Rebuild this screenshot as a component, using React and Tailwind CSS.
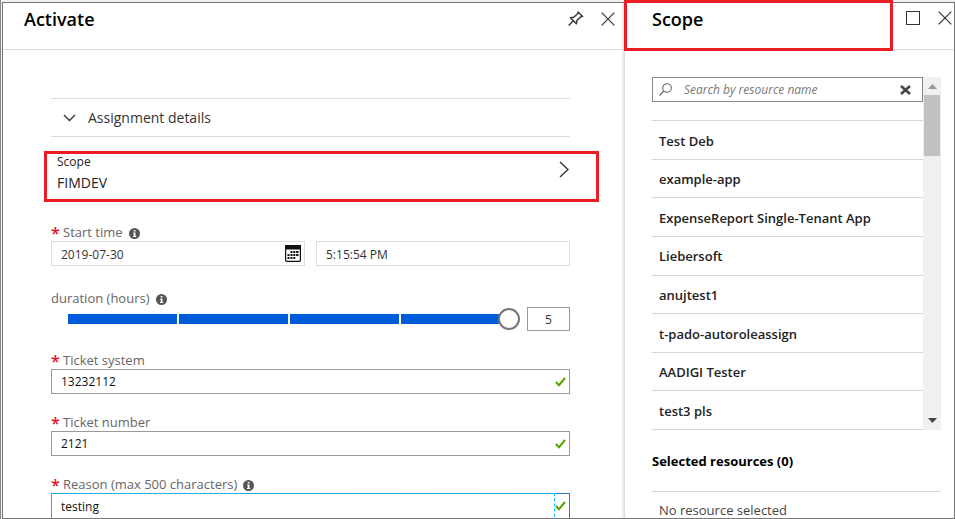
import React from "react";

const resources = [
  "Test Deb",
  "example-app",
  "ExpenseReport Single-Tenant App",
  "Liebersoft",
  "anujtest1",
  "t-pado-autoroleassign",
  "AADIGI Tester",
  "test3 pls",
];

function CloseIcon() {
  return (
    <svg width="14" height="14" viewBox="0 0 14 14" fill="none" stroke="#333" strokeWidth="1.2">
      <path d="M.7.7l12.6 12.6M13.3.7L.7 13.3" />
    </svg>
  );
}

function PinIcon() {
  return (
    <svg width="16" height="16" viewBox="0 0 16 16" fill="none" stroke="#333" strokeWidth="1.4" strokeLinejoin="round">
      <path d="M.6 14.600L5.400 9.800M2.400 6.800l6 6 .500-3.300L12.900 5.700l1.800-.3L10.100.900l-.5 1.900L5.800 6.300z" />
    </svg>
  );
}

function InfoIcon() {
  return (
    <svg width="11" height="11" viewBox="0 0 11 11" aria-label="Info">
      <circle cx="5.500" cy="5.500" r="5.500" fill="#555" />
      <path d="M4.700 1.900h1.800v1.500H4.700zM4.100 4.400h2.400v3.500h.7v1H4v-1h.7V5.400h-.6z" fill="#fff" />
    </svg>
  );
}

function CheckIcon() {
  return (
    <svg className="mr-[3px] shrink-0" width="11" height="10" viewBox="0 0 11 10" fill="none" stroke="#57a300" strokeWidth="2">
      <path d="M.8 5l3.200 3.200L10 1" />
    </svg>
  );
}

function CalendarIcon() {
  return (
    <svg width="16" height="17" viewBox="0 0 16 17">
      <rect x=".6" y=".6" width="14.800" height="15.800" rx=".8" fill="#fff" stroke="#111" strokeWidth="1.200" />
      <path d="M0 0h16v4.500H0z" fill="#111" />
      <path
        d="M5.500 6h2v2h-2zM8.300 6h2v2h-2zM11.100 6h2.400v2h-2.400zM2.500 9h2v2h-2zM5.500 9h2v2h-2zM8.300 9h2v2h-2zM11.100 9h2.400v2h-2.400zM2.500 12h2v2h-2zM5.500 12h2v2h-2zM8.300 12h2v2h-2z"
        fill="#111"
      />
    </svg>
  );
}

function FieldLabel({ htmlFor, required, info, children }) {
  return (
    <div className="flex h-4 items-center text-[13px] text-[#666]">
      {required && <span className="w-3 text-base leading-4 font-semibold text-[#e81123]">*</span>}
      <label htmlFor={htmlFor} className="mr-1.5">
        {children}
      </label>
      {info && (
        <span className="pt-px">
          <InfoIcon />
        </span>
      )}
    </div>
  );
}

function CheckedField({ id, label, value }) {
  return (
    <div>
      <FieldLabel htmlFor={id} required>
        {label}
      </FieldLabel>
      <div className="flex h-[25px] items-center border border-[#999]">
        <input id={id} defaultValue={value} className="min-w-0 flex-1 px-[9px] text-xs text-[#111] outline-none" />
        <CheckIcon />
      </div>
    </div>
  );
}

function ActivatePanel() {
  return (
    <section className="flex min-w-0 flex-1 flex-col border-r border-[#ddd] shadow-[inset_-4px_0_3px_-3px_#ddd]">
      <header className="flex h-[47px] shrink-0 items-start border-b border-[#d9d9d9] pr-[9px] pl-[21px]">
        <h1 className="flex-1 pt-1 text-lg leading-6 font-semibold text-black">Activate</h1>
        <div className="flex gap-[17px] pt-2">
          <button aria-label="Pin">
            <PinIcon />
          </button>
          <button aria-label="Close">
            <CloseIcon />
          </button>
        </div>
      </header>
      <div className="pt-12 pr-[54px] pl-12">
        <button className="flex h-[39px] w-full items-center border-y border-[#ddd] pl-3 text-sm text-[#333]">
          <svg width="13" height="8" viewBox="0 0 13 8" fill="none" stroke="#333" strokeWidth="1.4">
            <path d="M1 1l5.500 5.500L12 1" />
          </svg>
          <span className="pl-3">Assignment details</span>
        </button>
        <button className="-mr-7 -ml-[7px] mt-3.5 flex h-[51px] w-[calc(100%+36px)] items-start justify-between border-3 border-[#ed1c24] pr-[27px] pl-2.5 text-left text-[#222]">
          <span className="flex flex-col">
            <span className="text-xs leading-4">Scope</span>
            <span className="pt-[3px] text-sm leading-5">FIMDEV</span>
          </span>
          <svg className="mt-[7px]" width="10" height="17" viewBox="0 0 10 17" fill="none" stroke="#333" strokeWidth="1.4">
            <path d="M1 1l8 7.500L1 16" />
          </svg>
        </button>

        <div className="pt-[23px]">
          <FieldLabel htmlFor="start-date" required info>
            Start time
          </FieldLabel>
          <div className="grid grid-cols-2 gap-[11px]">
            <div className="flex h-[25px] items-center border border-[#ddd]">
              <input id="start-date" defaultValue="2019-07-30" className="min-w-0 flex-1 px-[9px] pt-0.5 text-xs text-[#333] outline-none" />
              <button aria-label="Choose date" className="mr-[3px]">
                <CalendarIcon />
              </button>
            </div>
            <input
              aria-label="Start time of day"
              defaultValue="5:15:54 PM"
              className="h-[25px] min-w-0 border border-[#ddd] px-[9px] pt-0.5 text-xs text-[#333] outline-none"
            />
          </div>
        </div>

        <div className="pt-[25px]">
          <FieldLabel htmlFor="duration" info>
            duration (hours)
          </FieldLabel>
          <div className="flex items-center gap-[7px] pl-[17px]">
            <div className="relative flex h-6 flex-1 items-center">
              <div className="mr-2.5 grid h-2.5 flex-1 grid-cols-4 gap-0.5">
                <div className="bg-[#015cda]" />
                <div className="bg-[#015cda]" />
                <div className="bg-[#015cda]" />
                <div className="bg-[#015cda]" />
              </div>
              <input
                id="duration"
                type="range"
                min="1"
                max="5"
                defaultValue="5"
                className="absolute inset-0 w-full appearance-none bg-transparent [&::-webkit-slider-thumb]:size-[22px] [&::-webkit-slider-thumb]:appearance-none [&::-webkit-slider-thumb]:rounded-full [&::-webkit-slider-thumb]:border-2 [&::-webkit-slider-thumb]:border-[#777] [&::-webkit-slider-thumb]:bg-white"
              />
            </div>
            <input
              aria-label="Duration value"
              defaultValue="5"
              className="h-6 w-[43px] border border-[#999] text-center text-xs text-[#333] outline-none"
            />
          </div>
        </div>

        <div className="flex flex-col gap-[21px] pt-[22px]">
          <CheckedField id="ticket-system" label="Ticket system" value="13232112" />
          <CheckedField id="ticket-number" label="Ticket number" value="2121" />
          <div>
            <FieldLabel htmlFor="reason" required info>
              Reason (max 500 characters)
            </FieldLabel>
            <div className="flex h-20">
              <div className="flex flex-1 border-t border-l border-[#5b8fd0]">
                <textarea
                  id="reason"
                  defaultValue="testing"
                  className="-mt-px -ml-px min-w-0 flex-1 resize-none border border-dashed border-[#00c3ff] px-[9px] pt-[5px] text-xs text-[#111] outline-none"
                />
              </div>
              <span className="border-t border-r border-[#2f7ac6] pt-[7px]">
                <CheckIcon />
              </span>
            </div>
          </div>
        </div>
      </div>
    </section>
  );
}

function ScopePanel() {
  return (
    <section className="flex w-[329px] shrink-0 flex-col">
      <header className="relative flex h-[47px] shrink-0 items-start border-b border-[#d9d9d9] pr-0.5 pl-[27px]">
        <div className="absolute -top-[3px] right-[61px] -bottom-[2px] -left-px border-3 border-[#ed1c24]" />
        <h2 className="flex-1 pt-1 text-lg leading-6 font-semibold text-black">Scope</h2>
        <div className="flex gap-[18px] pt-2">
          <button aria-label="Maximize" className="size-3.5 border border-[#333]" />
          <button aria-label="Close">
            <CloseIcon />
          </button>
        </div>
      </header>
      <div className="pt-[27px] pr-[13px] pl-[27px]">
        <div className="flex">
          <div className="min-w-0 flex-1">
            <div className="flex h-[25px] items-center border border-[#888] pr-2 pl-1.5">
              <svg width="13" height="13" viewBox="0 0 13 13" fill="none" stroke="#666" strokeWidth="1.100">
                <circle cx="8" cy="5" r="4.300" />
                <path d="M4.900 8L.5 12.500" />
              </svg>
              <input
                aria-label="Search by resource name"
                placeholder="Search by resource name"
                className="min-w-0 flex-1 pl-3 text-xs italic outline-none placeholder:text-[#777]"
              />
              <button aria-label="Clear search" className="mr-[3px]">
                <svg width="11" height="10" viewBox="0 0 11 10" stroke="#444" strokeWidth="2.600">
                  <path d="M1 1l9 8M10 1L1 9" />
                </svg>
              </button>
            </div>
            <ul className="mt-[18px] grid h-[310px] auto-rows-fr border-t border-[#d6d6d6]">
              {resources.map((name) => (
                <li key={name} className="flex border-b border-[#d6d6d6]">
                  <button className="flex-1 pt-[3px] pl-[7px] text-left text-[13px] font-semibold text-[#222]">{name}</button>
                </li>
              ))}
            </ul>
          </div>
          <div className="flex w-[18px] flex-col items-center bg-[#f0f0f0]">
            <button aria-label="Scroll up" className="flex h-[18px] items-center justify-center">
              <svg width="9" height="5" viewBox="0 0 9 5">
                <path d="M0 5L4.500 0 9 5z" fill="#999" />
              </svg>
            </button>
            <div className="h-[61px] w-4 bg-[#c1c1c1]" />
            <button aria-label="Scroll down" className="mt-auto flex h-5 items-center justify-center">
              <svg width="9" height="5" viewBox="0 0 9 5">
                <path d="M0 0l4.500 5L9 0z" fill="#444" />
              </svg>
            </button>
          </div>
        </div>
        <h3 className="pt-[21px] text-[13px] leading-5 font-bold text-black">Selected resources (0)</h3>
        <p className="mt-5 border-t border-[#d6d6d6] pt-2.5 pl-[7px] text-[13px] leading-4 text-[#444]">No resource selected</p>
      </div>
    </section>
  );
}

export default function App() {
  return (
    <div className="h-screen overflow-hidden border-l border-[#888] bg-[#f0f0f0] pt-0.5 pl-px font-['Open_Sans','Noto_Sans',sans-serif]">
      <main className="flex h-full overflow-clip border border-[#777] bg-white [overflow-clip-margin:3px]">
        <ActivatePanel />
        <ScopePanel />
      </main>
    </div>
  );
}
